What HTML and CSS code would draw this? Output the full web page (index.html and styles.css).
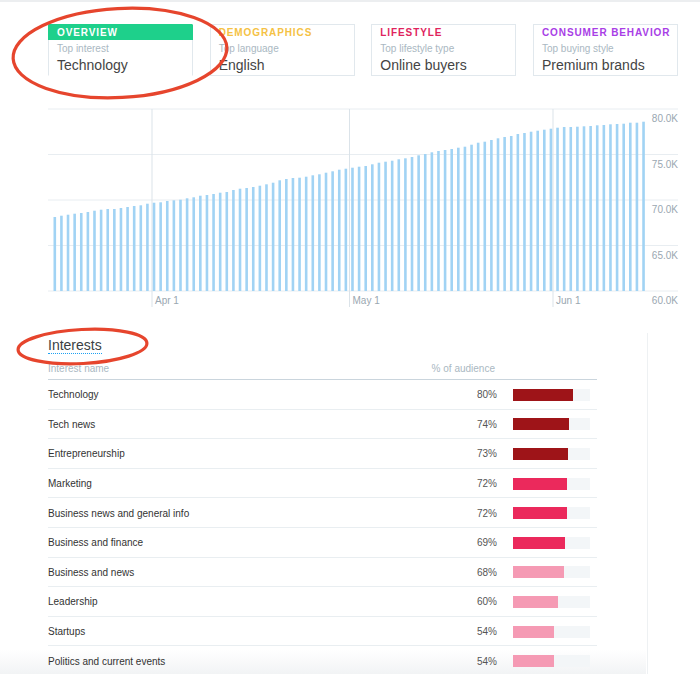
FILE: index.html
```html
<!DOCTYPE html>
<html lang="en">
<head>
<meta charset="utf-8">
<title>Audience insights</title>
<link rel="stylesheet" href="styles.css">
</head>
<body>
<div class="tabs">
  <div class="tab active">
    <div class="tab-head">OVERVIEW</div>
    <div class="tab-label">Top interest</div>
    <div class="tab-value">Technology</div>
  </div>
  <div class="tab">
    <div class="tab-head demo">DEMOGRAPHICS</div>
    <div class="tab-label">Top language</div>
    <div class="tab-value">English</div>
  </div>
  <div class="tab">
    <div class="tab-head life">LIFESTYLE</div>
    <div class="tab-label">Top lifestyle type</div>
    <div class="tab-value">Online buyers</div>
  </div>
  <div class="tab">
    <div class="tab-head consumer">CONSUMER BEHAVIOR</div>
    <div class="tab-label">Top buying style</div>
    <div class="tab-value">Premium brands</div>
  </div>
</div>

<svg class="chart" width="700" height="212" viewBox="0 0 700 212">
  <g class="grid">
    <line x1="48" y1="9" x2="678" y2="9"/>
    <line x1="48" y1="54.5" x2="678" y2="54.5"/>
    <line x1="48" y1="100" x2="678" y2="100"/>
    <line x1="48" y1="145.5" x2="678" y2="145.5"/>
    <line x1="48" y1="191" x2="678" y2="191"/>
  </g>
  <g class="vgrid">
    <line x1="152" y1="9" x2="152" y2="207"/>
    <line x1="349.5" y1="9" x2="349.5" y2="207"/>
    <line x1="553" y1="9" x2="553" y2="207"/>
  </g>
  <g class="bars" transform="translate(0,191) scale(1,-1)">
    <rect x="53.50" width="2.6" height="74.0"/>
    <rect x="60.12" width="2.6" height="75.3"/>
    <rect x="66.73" width="2.6" height="76.3"/>
    <rect x="73.35" width="2.6" height="77.3"/>
    <rect x="79.96" width="2.6" height="78.0"/>
    <rect x="86.58" width="2.6" height="79.0"/>
    <rect x="93.19" width="2.6" height="80.3"/>
    <rect x="99.81" width="2.6" height="81.3"/>
    <rect x="106.42" width="2.6" height="82.0"/>
    <rect x="113.04" width="2.6" height="82.0"/>
    <rect x="119.65" width="2.6" height="83.0"/>
    <rect x="126.27" width="2.6" height="84.0"/>
    <rect x="132.88" width="2.6" height="85.0"/>
    <rect x="139.50" width="2.6" height="85.7"/>
    <rect x="146.11" width="2.6" height="87.3"/>
    <rect x="152.73" width="2.6" height="88.3"/>
    <rect x="159.34" width="2.6" height="88.7"/>
    <rect x="165.96" width="2.6" height="90.0"/>
    <rect x="172.57" width="2.6" height="90.7"/>
    <rect x="179.19" width="2.6" height="91.3"/>
    <rect x="185.80" width="2.6" height="92.7"/>
    <rect x="192.42" width="2.6" height="93.7"/>
    <rect x="199.03" width="2.6" height="95.3"/>
    <rect x="205.65" width="2.6" height="96.0"/>
    <rect x="212.26" width="2.6" height="97.0"/>
    <rect x="218.88" width="2.6" height="98.3"/>
    <rect x="225.49" width="2.6" height="99.0"/>
    <rect x="232.11" width="2.6" height="101.0"/>
    <rect x="238.72" width="2.6" height="102.3"/>
    <rect x="245.34" width="2.6" height="103.0"/>
    <rect x="251.95" width="2.6" height="104.0"/>
    <rect x="258.57" width="2.6" height="105.3"/>
    <rect x="265.18" width="2.6" height="106.7"/>
    <rect x="271.80" width="2.6" height="108.3"/>
    <rect x="278.41" width="2.6" height="110.7"/>
    <rect x="285.03" width="2.6" height="112.0"/>
    <rect x="291.64" width="2.6" height="113.0"/>
    <rect x="298.26" width="2.6" height="113.3"/>
    <rect x="304.87" width="2.6" height="114.3"/>
    <rect x="311.49" width="2.6" height="115.7"/>
    <rect x="318.10" width="2.6" height="116.7"/>
    <rect x="324.72" width="2.6" height="118.3"/>
    <rect x="331.33" width="2.6" height="119.7"/>
    <rect x="337.95" width="2.6" height="121.3"/>
    <rect x="344.56" width="2.6" height="122.3"/>
    <rect x="351.18" width="2.6" height="123.3"/>
    <rect x="357.79" width="2.6" height="124.3"/>
    <rect x="364.41" width="2.6" height="125.0"/>
    <rect x="371.02" width="2.6" height="126.7"/>
    <rect x="377.64" width="2.6" height="128.3"/>
    <rect x="384.25" width="2.6" height="129.3"/>
    <rect x="390.87" width="2.6" height="130.3"/>
    <rect x="397.48" width="2.6" height="131.7"/>
    <rect x="404.10" width="2.6" height="132.7"/>
    <rect x="410.71" width="2.6" height="134.0"/>
    <rect x="417.33" width="2.6" height="135.7"/>
    <rect x="423.94" width="2.6" height="137.0"/>
    <rect x="430.56" width="2.6" height="138.7"/>
    <rect x="437.17" width="2.6" height="140.0"/>
    <rect x="443.79" width="2.6" height="141.0"/>
    <rect x="450.40" width="2.6" height="142.0"/>
    <rect x="457.02" width="2.6" height="143.3"/>
    <rect x="463.63" width="2.6" height="144.3"/>
    <rect x="470.25" width="2.6" height="146.3"/>
    <rect x="476.86" width="2.6" height="148.3"/>
    <rect x="483.48" width="2.6" height="149.3"/>
    <rect x="490.09" width="2.6" height="151.0"/>
    <rect x="496.71" width="2.6" height="152.7"/>
    <rect x="503.32" width="2.6" height="154.0"/>
    <rect x="509.94" width="2.6" height="155.0"/>
    <rect x="516.55" width="2.6" height="157.0"/>
    <rect x="523.17" width="2.6" height="158.0"/>
    <rect x="529.78" width="2.6" height="159.3"/>
    <rect x="536.40" width="2.6" height="160.3"/>
    <rect x="543.01" width="2.6" height="161.3"/>
    <rect x="549.63" width="2.6" height="162.3"/>
    <rect x="556.24" width="2.6" height="163.3"/>
    <rect x="562.86" width="2.6" height="164.0"/>
    <rect x="569.47" width="2.6" height="164.0"/>
    <rect x="576.09" width="2.6" height="164.3"/>
    <rect x="582.70" width="2.6" height="164.7"/>
    <rect x="589.32" width="2.6" height="165.0"/>
    <rect x="595.93" width="2.6" height="165.7"/>
    <rect x="602.55" width="2.6" height="166.0"/>
    <rect x="609.16" width="2.6" height="166.7"/>
    <rect x="615.78" width="2.6" height="167.0"/>
    <rect x="622.39" width="2.6" height="167.3"/>
    <rect x="629.01" width="2.6" height="168.3"/>
    <rect x="635.62" width="2.6" height="168.3"/>
    <rect x="642.24" width="2.6" height="169.3"/>
  </g>
  <g class="labels">
    <text x="678" y="22" text-anchor="end">80.0K</text>
    <text x="678" y="67.5" text-anchor="end">75.0K</text>
    <text x="678" y="113" text-anchor="end">70.0K</text>
    <text x="678" y="158.5" text-anchor="end">65.0K</text>
    <text x="678" y="203.5" text-anchor="end">60.0K</text>
    <text x="155" y="203.5">Apr 1</text>
    <text x="352.5" y="203.5">May 1</text>
    <text x="556" y="203.5">Jun 1</text>
  </g>
</svg>

<div class="lower">
  <div class="table-col">
    <div class="section-title"><span>Interests</span></div>
    <div class="thead">
      <span>Interest name</span>
      <span class="th-pct">% of audience</span>
      <span></span>
    </div>
    <div class="row"><span>Technology</span><span class="pct">80%</span><span class="track"><span class="fill dark" style="width:60px"></span></span></div>
    <div class="row"><span>Tech news</span><span class="pct">74%</span><span class="track"><span class="fill dark" style="width:55.5px"></span></span></div>
    <div class="row"><span>Entrepreneurship</span><span class="pct">73%</span><span class="track"><span class="fill dark" style="width:54.75px"></span></span></div>
    <div class="row"><span>Marketing</span><span class="pct">72%</span><span class="track"><span class="fill mid" style="width:54px"></span></span></div>
    <div class="row"><span>Business news and general info</span><span class="pct">72%</span><span class="track"><span class="fill mid" style="width:54px"></span></span></div>
    <div class="row"><span>Business and finance</span><span class="pct">69%</span><span class="track"><span class="fill mid" style="width:51.75px"></span></span></div>
    <div class="row"><span>Business and news</span><span class="pct">68%</span><span class="track"><span class="fill light" style="width:51px"></span></span></div>
    <div class="row"><span>Leadership</span><span class="pct">60%</span><span class="track"><span class="fill light" style="width:45px"></span></span></div>
    <div class="row"><span>Startups</span><span class="pct">54%</span><span class="track"><span class="fill light" style="width:40.5px"></span></span></div>
    <div class="row"><span>Politics and current events</span><span class="pct">54%</span><span class="track"><span class="fill light" style="width:40.5px"></span></span></div>
  </div>
  <div class="side"></div>
</div>

<div class="fade"></div>

<svg class="mark mark-top" width="240" height="110" viewBox="0 0 240 110">
  <ellipse cx="120" cy="51" rx="107" ry="44.5" transform="rotate(-3 120 51)"/>
</svg>
<svg class="mark mark-interests" width="170" height="50" viewBox="0 0 170 50">
  <ellipse cx="82.5" cy="24.5" rx="64.5" ry="17" transform="rotate(-3 82.5 24.5)"/>
</svg>
</body>
</html>
```

FILE: styles.css
```css
html, body {
  margin: 0;
  padding: 0;
}

body {
  position: relative;
  width: 700px;
  overflow: hidden;
  background: #fff;
  border-top: 2px solid #eceef0;
  font-family: "Liberation Sans", Arial, sans-serif;
  color: #333;
}

/* ---------- tabs ---------- */
.tabs {
  display: grid;
  grid-template-columns: repeat(4, 145px);
  column-gap: 16.67px;
  padding: 22px 0 0 48px;
}

.tab {
  border: 1px solid #e1e8ed;
  background: #fff;
}

.tab.active {
  border-top-color: #1ed08b;
  border-bottom-color: transparent;
}

.tab-head {
  font-size: 10px;
  font-weight: bold;
  letter-spacing: 0.9px;
  line-height: 15px;
  padding: 0 8px;
  white-space: nowrap;
}

.tab.active .tab-head {
  background: #1ed08b;
  color: #fff;
  margin: 0 -1px;
  padding: 0 9px;
}

.tab-head.demo { color: #f5c245; }
.tab-head.life { color: #e0245e; }
.tab-head.consumer { color: #a83ee6; }

.tab-label {
  font-size: 10px;
  line-height: 12px;
  color: #aab8c2;
  margin-top: 3px;
  padding: 0 8px;
}

.tab-value {
  font-size: 14px;
  line-height: 16px;
  color: #444;
  margin-top: 2px;
  padding: 0 8px 2px;
  white-space: nowrap;
}

/* ---------- chart ---------- */
.chart {
  display: block;
  margin-top: 24px;
}

.chart .grid line {
  stroke: #e8edf1;
  stroke-width: 1;
}

.chart .vgrid line {
  stroke: #dbe3e9;
  stroke-width: 1;
}

.chart .bars rect {
  fill: #a1d3f4;
}

.chart .labels text {
  font-family: "Liberation Sans", Arial, sans-serif;
  font-size: 10px;
  fill: #9aa7b1;
}

/* ---------- interests table ---------- */
.lower {
  display: flex;
  margin-top: 21px;
}

.table-col {
  width: 549px;
  padding: 0 50px 0 48px;
  flex: none;
}

.side {
  flex: 1;
  border-left: 1px solid #eef1f3;
  min-height: 360px;
}

.section-title {
  display: flex;
  padding-top: 4px;
}

.section-title span {
  font-size: 14px;
  line-height: 16px;
  color: #3a3f44;
  border-bottom: 1px dotted #1da1f2;
}

.thead,
.row {
  display: grid;
  grid-template-columns: 1fr 60px 77px;
  column-gap: 16px;
  padding-right: 7px;
  font-size: 10px;
}

.thead {
  box-sizing: border-box;
  height: 26px;
  padding-top: 9px;
  line-height: 12px;
  color: #aab8c2;
  border-bottom: 1px solid #cad5dd;
}

.th-pct {
  justify-self: end;
  white-space: nowrap;
  margin-right: 2px;
}

.row {
  box-sizing: border-box;
  height: 29.6px;
  padding-top: 2px;
  align-items: center;
  border-bottom: 1px solid #e9eef1;
  color: #333;
  line-height: 12px;
}

.pct {
  text-align: right;
  color: #555;
}

.track {
  display: flex;
  height: 12px;
  margin-top: -1px;
  background: #f3f6f8;
}

.fill {
  height: 100%;
}

.fill.dark { background: #9e1418; }
.fill.mid { background: #eb295c; }
.fill.light { background: #f59ab4; }

/* ---------- overlays ---------- */
.fade {
  position: absolute;
  z-index: -1;
  left: 0;
  top: 648px;
  width: 646px;
  height: 28px;
  background: linear-gradient(rgba(238, 240, 242, 0), rgba(238, 240, 242, 0.9));
}

.mark {
  position: absolute;
  left: 0;
  overflow: visible;
}

.mark-top {
  top: 0;
}

.mark-interests {
  top: 320px;
}

.mark ellipse {
  fill: none;
  stroke: #e6452d;
  stroke-width: 3.2;
}
```
